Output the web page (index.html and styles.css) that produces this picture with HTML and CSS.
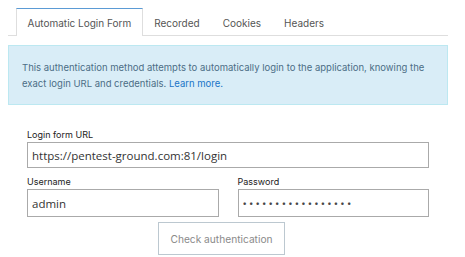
FILE: index.html
```html
<!DOCTYPE html>
<html>
<head>
<meta charset="utf-8">
<link rel="stylesheet" href="styles.css">
</head>
<body>
<div class="page">
  <ul class="tabs">
    <li class="tab active">Automatic Login Form</li>
    <li class="tab">Recorded</li>
    <li class="tab">Cookies</li>
    <li class="tab">Headers</li>
  </ul>
  <div class="info">This authentication method attempts to automatically login to the application, knowing the exact login URL and credentials. <a href="#" class="link">Learn more.</a></div>
  <form class="form">
    <div class="field">
      <label class="label">Login form URL</label>
      <input class="input" type="text" value="https://pentest-ground.com:81/login">
    </div>
    <div class="row">
      <div class="field">
        <label class="label">Username</label>
        <input class="input" type="text" value="admin">
      </div>
      <div class="field">
        <label class="label">Password</label>
        <input class="input pw" type="password" value="aaaaaaaaaaaaaaaaa">
      </div>
    </div>
    <div class="actions">
      <button type="button" class="btn">Check authentication</button>
    </div>
  </form>
</div>
</body>
</html>
```
FILE: styles.css
```css
* { box-sizing: border-box; }
body {
  margin: 0;
  font-family: Inter, "Noto Sans", sans-serif;
  background: #fff;
}
.page {
  padding: 8px 17px 0 8px;
}
.tabs {
  list-style: none;
  margin: 0;
  padding: 0 0 0 8px;
  display: flex;
  border-bottom: 1px solid #dedede;
}
.tab {
  height: 28px;
  padding: 0 10.5px;
  display: flex;
  align-items: center;
  font-size: 10px;
  color: #555;
  border: 1px solid transparent;
  border-bottom: none;
  margin-bottom: -1px;
}
.tab.active {
  border-color: #dedede;
  border-top-color: #5b9bd5;
  background: #fff;
}
.info {
  margin-top: 9px;
  background: #d9edf7;
  border: 1px solid #bce8f1;
  padding: 14px 12px 10px 13px;
  font-size: 9.5px;
  line-height: 16px;
  color: #4c6e86;
  height: 60px;
}
.link { color: #1a75c8; text-decoration: none; }
.form {
  padding: 0 19px;
  margin-top: 24px;
}
.field { display: flex; flex-direction: column; flex: 1; }
.label {
  font-size: 9px;
  color: #222;
  line-height: 12px;
  margin-bottom: 1px;
}
.input {
  height: 26px;
  border: 1px solid #aaa;
  padding: 0 4px;
  font-family: "Open Sans", Inter, sans-serif;
  font-size: 11.5px;
  color: #333;
  outline: none;
}
.pw { font-size: 11.5px; letter-spacing: 2.2px; color: #444; }
.row {
  display: flex;
  gap: 19px;
  margin-top: 8px;
}
.row .input { height: 28px; }
.actions {
  margin-top: 5px;
  padding-left: 131px;
}
.btn {
  width: 127px;
  height: 33px;
  background: #fff;
  border: 1px solid #bcc8d0;
  font-family: Inter, sans-serif;
  font-size: 10.2px;
  color: #8a8a8a;
}
```
